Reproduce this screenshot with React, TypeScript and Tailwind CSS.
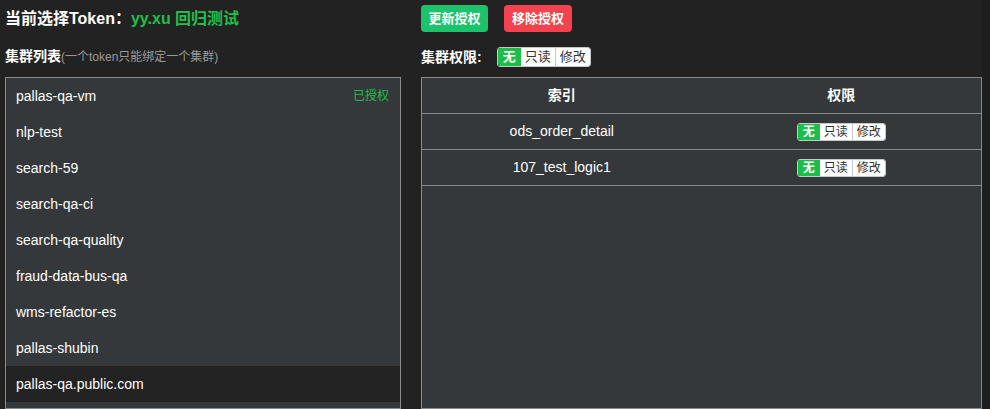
import React from 'react';

const clusters = [
  'pallas-qa-vm',
  'nlp-test',
  'search-59',
  'search-qa-ci',
  'search-qa-quality',
  'fraud-data-bus-qa',
  'wms-refactor-es',
  'pallas-shubin',
  'pallas-qa.public.com',
];

const indices = ['ods_order_detail', '107_test_logic1'];

function PermGroup({ big }: { big?: boolean }) {
  return (
    <div
      className={`flex rounded-[3px] overflow-hidden border border-[#c8c8c8] ${
        big ? 'h-[20px] leading-[18px] text-[13px]' : 'h-[18px] leading-[16px] text-[12px]'
      }`}
    >
      <span className="px-[5px] bg-[#1dbd4a] text-white font-bold">无</span>
      <span className="px-[4px] bg-white text-[#333] border-r border-[#c8c8c8]">只读</span>
      <span className="px-[4px] bg-white text-[#333]">修改</span>
    </div>
  );
}

export default function App() {
  const font = { fontFamily: '"Liberation Sans", "Noto Sans CJK SC", sans-serif' };
  return (
    <div className="w-[990px] h-[409px] overflow-hidden bg-[#222222] text-white flex" style={font}>
      {/* left column */}
      <div className="w-[421px] shrink-0 pl-[5px] flex flex-col">
        <div className="h-[38px] shrink-0 pt-[8px] text-[16px] font-bold leading-[22px]">
          当前选择Token：<span className="text-[#1fbf4b]">yy.xu 回归测试</span>
        </div>
        <div className="h-[39px] shrink-0 pt-[8px] leading-[20px]">
          <span className="font-bold text-[14px]">集群列表</span>
          <span className="text-[#9a9a9a] text-[12px]">(一个token只能绑定一个集群)</span>
        </div>
        <div className="w-[396px] flex-1 min-h-0 overflow-hidden bg-[#35383b] border border-[#8a8a8a]">
          {clusters.map((c, i) => (
            <div
              key={c}
              className={`h-[36px] pl-[10px] pr-[11px] flex items-center justify-between text-[14px] ${
                i === 8 ? 'bg-[#232323]' : ''
              }`}
            >
              <span>{c}</span>
              {i === 0 && <span className="text-[#1fbf4b] text-[12px]">已授权</span>}
            </div>
          ))}
        </div>
      </div>

      {/* right column */}
      <div className="w-[561px] shrink-0 flex flex-col">
        <div className="h-[38px] shrink-0 pt-[5px] flex gap-[16px]">
          <button className="w-[67px] h-[27px] rounded-[4px] bg-[#1cc36a] text-white text-[13px] font-bold">
            更新授权
          </button>
          <button className="w-[68px] h-[27px] rounded-[4px] bg-[#f4434f] text-white text-[13px] font-bold">
            移除授权
          </button>
        </div>
        <div className="h-[39px] shrink-0 pt-[9px] flex items-start gap-[15px]">
          <span className="text-[14px] font-bold leading-[20px]">集群权限:</span>
          <PermGroup big />
        </div>
        <div className="flex-1 min-h-0 bg-[#35383b] border border-[#8a8a8a]">
          <div className="grid grid-cols-2 h-[36px] items-center text-[14px] font-bold border-b border-[#8a8a8a]">
            <div className="text-center">索引</div>
            <div className="text-center">权限</div>
          </div>
          {indices.map((n) => (
            <div
              key={n}
              className="grid grid-cols-2 h-[36px] items-center text-[14px] border-b border-[#8a8a8a]"
            >
              <div className="text-center">{n}</div>
              <div className="flex justify-center">
                <PermGroup />
              </div>
            </div>
          ))}
        </div>
      </div>
      <div className="flex-1 bg-[#1e1e1e]" />
    </div>
  );
}
